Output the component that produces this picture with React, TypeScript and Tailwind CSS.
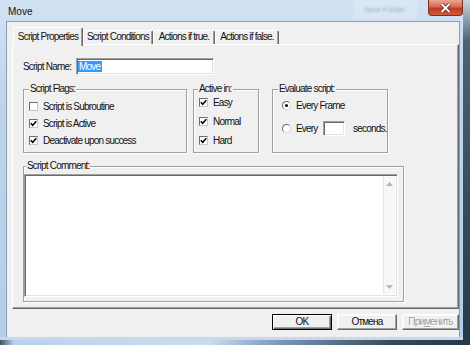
import React from 'react'

// Win7 dialog "Move" — script properties

function CheckBox({ checked, label }: { checked?: boolean; label: string }) {
  return (
    <div className="flex items-center h-[17px]">
      <span className="w-[9px] h-[9px] shrink-0 bg-white border border-t-[#6d6d6d] border-l-[#6d6d6d] border-r-[#c8c8c8] border-b-[#c8c8c8] flex items-center justify-center">
        {checked && (
          <svg width="7" height="7" viewBox="0 0 7 7">
            <path d="M0.8 3.3 L2.7 5.3 L6.3 1.2" fill="none" stroke="#000" strokeWidth="1.5" />
          </svg>
        )}
      </span>
      <span className="ml-[5px] leading-[12px]">{label}</span>
    </div>
  )
}

function Radio({ checked }: { checked?: boolean }) {
  return (
    <span className="w-[9px] h-[9px] shrink-0 rounded-full bg-white border border-t-[#6d6d6d] border-l-[#6d6d6d] border-r-[#d4d4d4] border-b-[#d4d4d4] flex items-center justify-center">
      {checked && <span className="w-[3px] h-[3px] rounded-full bg-black" />}
    </span>
  )
}

function Group({
  label,
  className = '',
  labelClass = 'left-[5px]',
  children
}: {
  label: string
  className?: string
  labelClass?: string
  children?: React.ReactNode
}) {
  return (
    <div className={`relative border border-[#a0a0a0] shadow-[inset_1px_1px_0_#fff,1px_1px_0_#fff] ${className}`}>
      <span className={`absolute -top-[7px] ${labelClass} bg-[#f0f0f0] px-[1px] leading-[12px]`}>{label}</span>
      {children}
    </div>
  )
}

const sunken =
  'bg-white border border-t-[#a0a0a0] border-l-[#a0a0a0] border-r-white border-b-white shadow-[inset_1px_1px_0_#696969,inset_-1px_-1px_0_#e3e3e3]'

const raised =
  'bg-[#f0f0f0] border border-t-white border-l-white border-r-[#696969] border-b-[#696969] shadow-[inset_-1px_-1px_0_#a0a0a0,inset_1px_1px_0_#f8f8f8]'

export default function App() {
  const tabs = [
    { label: 'Script Conditions', w: 'w-[70px]' },
    { label: 'Actions if true.', w: 'w-[62px]' },
    { label: 'Actions if false.', w: 'w-[64px]' }
  ]

  return (
    <div className="w-[470px] h-[345px] overflow-hidden flex whitespace-nowrap bg-[linear-gradient(to_bottom,#c9d6e0_0%,#4b6272_12%,#253a47_100%)] font-['Liberation_Sans',Arial,sans-serif] text-[10px] tracking-[-0.8px] text-[#111]">
      {/* window frame */}
      <div className="w-[463px] h-[345px] flex flex-col bg-[linear-gradient(to_bottom,#d2e2f3_0%,#bdd4ec_30%,#b5cde7_100%)]">
        {/* title bar */}
        <div className="h-[22px] flex items-start">
          <span className="pl-[8px] pt-[6px] text-[10px] tracking-normal leading-[12px]">Move</span>
          <div className="flex-1" />
          <div className="w-[64px] h-[20px] mr-[11px] bg-white/20 blur-[0.8px] flex items-center justify-center text-[8px] tracking-normal text-[#9aadc2]">
            New Folder
          </div>
          <div className="w-[35px] h-[16px] rounded-b-[4px] border border-t-0 border-[#7a3225] bg-[linear-gradient(to_bottom,#e9a694_0%,#d66a53_45%,#c13b20_55%,#d1583c_100%)] flex items-center justify-center">
            <svg width="11" height="10" viewBox="0 0 11 10">
              <path d="M1.5 1 L9.5 9 M9.5 1 L1.5 9" stroke="#4a1a12" strokeWidth="3.4" />
              <path d="M1.5 1 L9.5 9 M9.5 1 L1.5 9" stroke="#fff" strokeWidth="2" />
            </svg>
          </div>
        </div>

        {/* middle */}
        <div className="h-[315px] flex">
          <div className="w-[7px]" />
          {/* client area */}
          <div className="w-[452px] h-[315px] bg-[#f0f0f0] shadow-[0_0_0_1px_#8b9fb4] flex flex-col pl-[5px] pt-[5px]">
            {/* tab strip */}
            <div className="h-[17px] flex items-end pl-[1px]">
              <div className="relative z-10 -mb-[2px] w-[70px] h-[19px] rounded-t-[2px] bg-[#f0f0f0] border-t border-l border-r border-t-white border-l-white border-r-[#696969] shadow-[inset_-1px_0_0_#a0a0a0] text-center pt-[3px] leading-[12px]">
                Script Properties
              </div>
              {tabs.map(t => (
                <div
                  key={t.label}
                  className={`${t.w} h-[14px] rounded-t-[2px] border-t border-l border-r border-t-white border-l-white border-r-[#696969] shadow-[inset_-1px_0_0_#a0a0a0] text-center leading-[12px]`}
                >
                  {t.label}
                </div>
              ))}
            </div>

            {/* tab panel */}
            <div className="w-[447px] h-[265px] border border-t-white border-l-white border-r-[#696969] border-b-[#696969] shadow-[inset_-1px_-1px_0_#a0a0a0] pl-[10px] pt-[13px]">
              <div className="flex items-center h-[17px]">
                <span className="w-[53px] leading-[12px]">Script Name:</span>
                <div className={`w-[138px] h-[17px] ${sunken} flex items-center pl-[1px]`}>
                  <span className="bg-[#3399ff] text-white leading-[11px] pl-[1px] pr-[2px]">Move</span>
                </div>
              </div>

              <div className="flex mt-[14px]">
                <Group label="Script Flags:" className="w-[164px] h-[64px] pl-[5px] pt-[8px]">
                  <CheckBox label="Script is Subroutine" />
                  <CheckBox checked label="Script is Active" />
                  <CheckBox checked label="Deactivate upon success" />
                </Group>
                <Group label="Active in:" labelClass="left-[4px]" className="ml-[6px] w-[66px] h-[64px] pl-[5px] pt-[4px]">
                  <div className="flex flex-col gap-[2px]">
                    <CheckBox checked label="Easy" />
                    <CheckBox checked label="Normal" />
                    <CheckBox checked label="Hard" />
                  </div>
                </Group>
                <Group label="Evaluate script:" className="ml-[13px] w-[116px] h-[64px] pl-[9px] pt-[7px]">
                  <div className="flex items-center h-[17px]">
                    <Radio checked />
                    <span className="ml-[5px] leading-[12px]">Every Frame</span>
                  </div>
                  <div className="flex items-center h-[17px] mt-[6px]">
                    <Radio />
                    <span className="ml-[5px] w-[27px] leading-[12px]">Every</span>
                    <div className={`w-[22px] h-[15px] ${sunken}`} />
                    <span className="ml-[8px] leading-[12px]">seconds.</span>
                  </div>
                </Group>
              </div>

              <Group label="Script Comment:" labelClass="left-[2px]" className="mt-[13px] w-[381px] h-[136px] pt-[7px]">
                <div className={`w-[374px] h-[123px] ${sunken} flex justify-end p-[2px]`}>
                  <div className="w-[12px] h-full bg-[#f7f7f7] border-l border-[#e6e6e6] flex flex-col items-center justify-between py-[5px]">
                    <svg width="7" height="4" viewBox="0 0 7 4">
                      <path d="M0 4 L3.5 0 L7 4 Z" fill="#b4b4b4" />
                    </svg>
                    <svg width="7" height="4" viewBox="0 0 7 4">
                      <path d="M0 0 L3.5 4 L7 0 Z" fill="#b4b4b4" />
                    </svg>
                  </div>
                </div>
              </Group>
            </div>

            {/* buttons */}
            <div className="flex mt-[5px] pl-[260px] gap-[5px]">
              <div className="w-[60px] h-[16px] border border-black bg-[#f0f0f0] shadow-[inset_1px_1px_0_#fff,inset_-1px_-1px_0_#696969,inset_-2px_-2px_0_#a0a0a0] flex items-center justify-center leading-[12px]">
                OK
              </div>
              <div className={`w-[60px] h-[16px] ${raised} flex items-center justify-center leading-[12px]`}>
                Отмена
              </div>
              <div className={`w-[57px] h-[16px] ${raised} flex items-center justify-center leading-[12px] text-[#a0a0a0] [text-shadow:1px_1px_0_#fff]`}>
                При<span className="underline">м</span>енить
              </div>
            </div>
          </div>
          <div className="w-[4px]" />
        </div>

        {/* bottom frame */}
        <div className="h-[8px] flex flex-col">
          <div className="h-[3px] bg-[#c4d9ee]" />
          <div className="h-[5px] bg-[linear-gradient(to_right,#3e5264_0%,#b9d2ea_3%,#c9ddf1_45%,#7d99b4_60%,#33495a_85%,#263a47_100%)]" />
        </div>
      </div>
    </div>
  )
}
